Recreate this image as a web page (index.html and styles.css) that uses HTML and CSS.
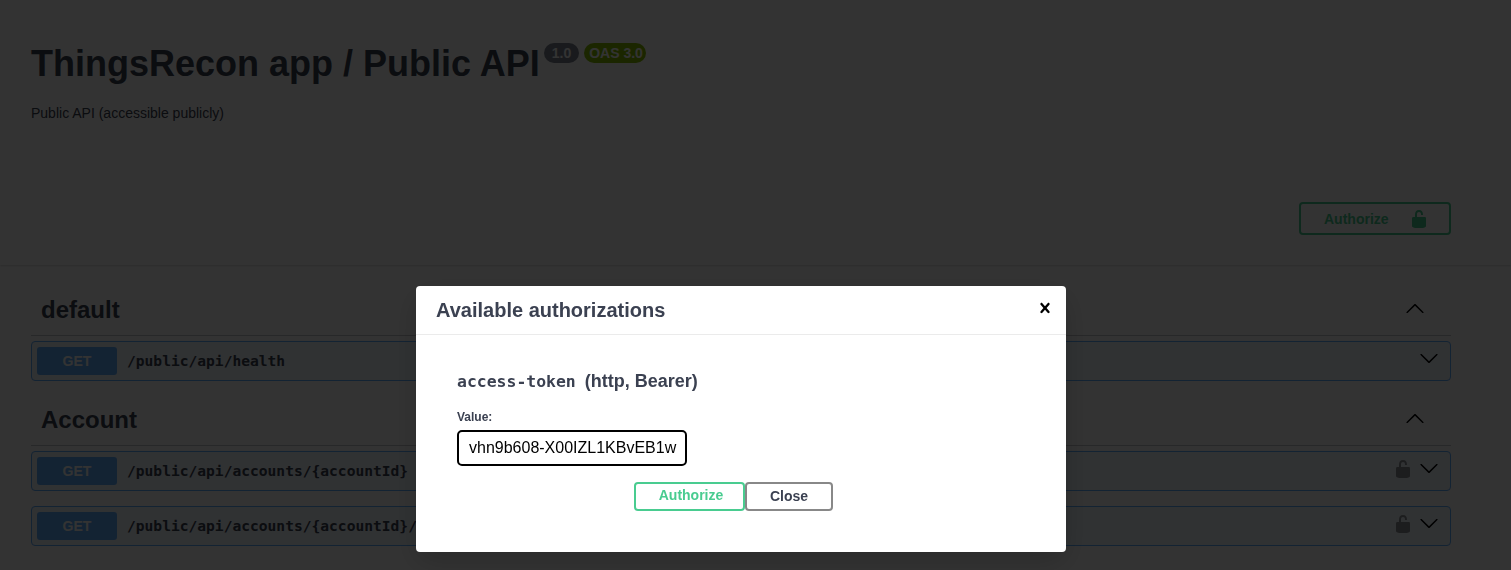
FILE: index.html
```html
<!DOCTYPE html>
<html lang="en">
<head>
<meta charset="utf-8">
<title>ThingsRecon app / Public API</title>
<link rel="stylesheet" href="styles.css">
</head>
<body>
<svg class="defs" width="0" height="0" aria-hidden="true">
  <symbol id="arrow" viewBox="0 0 20 20"><path d="M17.418 6.109c.272-.268.709-.268.979 0s.271.701 0 .969l-7.908 7.83c-.27.268-.707.268-.979 0l-7.908-7.83c-.27-.268-.27-.701 0-.969.271-.268.709-.268.979 0L10 13.25l7.418-7.141z"/></symbol>
  <symbol id="arrow-up" viewBox="0 0 20 20"><path d="M17.418 14.908c.272.268.709.268.979 0s.271-.701 0-.969l-7.908-7.83c-.27-.268-.707-.268-.979 0l-7.908 7.83c-.27.268-.27.701 0 .969.271.268.709.268.979 0L10 7.767l7.418 7.141z"/></symbol>
  <symbol id="lock" viewBox="0 0 20 20"><path transform="matrix(-1 0 0 1 20 0)" d="M15.8 8H14V5.6C14 2.703 12.665 1 10 1 7.334 1 6 2.703 6 5.6V6h2v-.801C8 3.754 8.797 3 10 3c1.203 0 2 .754 2 2.199V8H4c-.553 0-1 .646-1 1.199V17c0 .549.428 1.139.951 1.307l1.197.387C5.672 18.861 6.55 19 7.1 19h5.8c.549 0 1.428-.139 1.951-.307l1.196-.387c.524-.167.953-.757.953-1.306V9.199C17 8.646 16.352 8 15.8 8z"/></symbol>
</svg>

<header class="info">
  <div class="title-row">
    <h2 class="title">ThingsRecon app / Public API</h2>
    <span class="badge badge-version">1.0</span>
    <span class="badge badge-oas">OAS 3.0</span>
  </div>
  <p class="description">Public API (accessible publicly)</p>
</header>

<section class="scheme-bar">
  <button class="btn-authorize" type="button">
    <span>Authorize</span>
    <svg class="lock-green"><use href="#lock"/></svg>
  </button>
</section>

<main class="tags">
  <section class="tag">
    <div class="tag-head">
      <h3 class="tag-name">default</h3>
      <svg class="arrow"><use href="#arrow-up"/></svg>
    </div>
    <div class="op">
      <span class="method">GET</span>
      <code class="path">/public/api/health</code>
      <svg class="arrow"><use href="#arrow"/></svg>
    </div>
  </section>
  <section class="tag">
    <div class="tag-head">
      <h3 class="tag-name">Account</h3>
      <svg class="arrow"><use href="#arrow-up"/></svg>
    </div>
    <div class="op">
      <span class="method">GET</span>
      <code class="path">/public/api/accounts/{accountId}</code>
      <svg class="lock-dim"><use href="#lock"/></svg>
      <svg class="arrow"><use href="#arrow"/></svg>
    </div>
    <div class="op">
      <span class="method">GET</span>
      <code class="path">/public/api/accounts/{accountId}/domains</code>
      <svg class="lock-dim"><use href="#lock"/></svg>
      <svg class="arrow"><use href="#arrow"/></svg>
    </div>
  </section>
</main>

<div class="backdrop">
  <div class="modal">
    <div class="modal-head">
      <h3 class="modal-title">Available authorizations</h3>
      <button class="modal-close" type="button" aria-label="Close">
        <svg viewBox="0 0 20 20"><path d="M14.348 14.849c-.469.469-1.229.469-1.697 0L10 11.819l-2.651 3.029c-.469.469-1.229.469-1.697 0-.469-.469-.469-1.229 0-1.697l2.758-3.15-2.759-3.152c-.469-.469-.469-1.228 0-1.697.469-.469 1.228-.469 1.697 0L10 8.183l2.651-3.031c.469-.469 1.228-.469 1.697 0 .469.469.469 1.229 0 1.697l-2.758 3.152 2.758 3.15c.469.469.469 1.229 0 1.698z"/></svg>
      </button>
    </div>
    <div class="modal-body">
      <h4 class="scheme-title"><code class="scheme-name">access-token</code> (http, Bearer)</h4>
      <label class="value-label" for="token">Value:</label>
      <input class="token" id="token" type="text" value="vhn9b608-X00IZL1KBvEB1w">
      <div class="modal-actions">
        <button class="btn btn-green" type="button">Authorize</button>
        <button class="btn btn-grey" type="button">Close</button>
      </div>
    </div>
  </div>
</div>
</body>
</html>
```

FILE: styles.css
```css
* { box-sizing: border-box; }
html, body { margin: 0; height: 570px; overflow: hidden; }
body {
  background: #fff;
  color: #3b4151;
  font-family: "Liberation Sans", Arial, sans-serif;
}
.defs { position: absolute; }

.info { height: 170px; padding: 43px 31px 0; }
.title-row { display: flex; align-items: flex-start; }
.title {
  margin: 0;
  font-size: 36px;
  line-height: 41px;
  font-weight: 700;
}
.badge {
  height: 20px;
  border-radius: 10px;
  color: #fff;
  font-size: 14px;
  line-height: 20px;
  font-weight: 700;
}
.badge-version { margin-left: 4px; padding: 0 8px; background: #7d8492; }
.badge-oas { margin-left: 5px; padding: 0 3px 0 5px; background: #89bf04; }
.description { margin: 21px 0 0; font-size: 14px; line-height: 16px; }

.scheme-bar {
  height: 95px;
  padding: 32px 60px 30px 31px;
  display: flex;
  justify-content: flex-end;
  background: #fff;
  box-shadow: 0 1px 2px rgba(0, 0, 0, .15);
}
.btn-authorize {
  width: 152px;
  height: 33px;
  padding: 0 20px 0 23px;
  display: flex;
  align-items: center;
  justify-content: space-between;
  background: transparent;
  border: 2px solid #49cc90;
  border-radius: 4px;
  color: #49cc90;
  font: 700 14px "Liberation Sans", Arial, sans-serif;
}
.lock-green { width: 20px; height: 20px; fill: #49cc90; }

.tags { padding: 21px 60px 0 31px; }
.tag-head {
  height: 50px;
  padding: 0 26px 2px 10px;
  display: flex;
  align-items: center;
  justify-content: space-between;
  border-bottom: 1px solid rgba(59, 65, 81, .3);
  margin-bottom: 5px;
}
.tag-name { margin: 0; font-size: 24px; font-weight: 700; }
.arrow { width: 20px; height: 20px; flex: none; fill: #000; }
.tag-head .arrow { margin-bottom: 3px; }
.op .arrow { margin-bottom: 6px; }
.op {
  height: 40px;
  padding: 5px 11px 5px 5px;
  margin-bottom: 15px;
  display: flex;
  align-items: center;
  background: rgba(97, 175, 254, .1);
  border: 1px solid #61affe;
  border-radius: 4px;
}
.method {
  width: 80px;
  height: 28px;
  flex: none;
  background: #61affe;
  border-radius: 3px;
  color: #fff;
  font-size: 14px;
  line-height: 28px;
  font-weight: 700;
  text-align: center;
}
.path {
  flex: 1;
  margin: 0 0 2px 10px;
  font: 700 14.6px "DejaVu Sans Mono", monospace;
}
.lock-dim { width: 20px; height: 20px; margin: 0 6px 4px 0; opacity: .4; fill: #000; }

.backdrop {
  position: fixed;
  inset: 0;
  padding: 286px 0 0 416px;
  background: rgba(0, 0, 0, .8);
}
.modal {
  width: 650px;
  height: 266px;
  background: #fff;
  border-radius: 4px;
  box-shadow: 0 10px 30px -2px rgba(0, 0, 0, .2);
}
.modal-head {
  height: 49px;
  padding: 0 11px 0 20px;
  display: flex;
  align-items: center;
  justify-content: space-between;
  border-bottom: 1px solid #ebebeb;
}
.modal-title { margin: 0; font-size: 20px; font-weight: 700; }
.modal-close {
  width: 20px;
  height: 20px;
  padding: 0;
  margin-top: -5px;
  border: 0;
  background: none;
}
.modal-close svg { display: block; width: 20px; height: 20px; fill: #000; }
.modal-body { padding: 36px 0 0 41px; }
.scheme-title { margin: 0; font-size: 18px; line-height: 21px; font-weight: 700; }
.scheme-name { font: 700 16.45px "DejaVu Sans Mono", monospace; margin-right: 4px; }
.value-label {
  display: block;
  margin-top: 18px;
  font-size: 12px;
  line-height: 14px;
  font-weight: 700;
}
.token {
  display: block;
  width: 230px;
  height: 36px;
  margin-top: 6px;
  padding: 0 8px 0 10px;
  background: #fff;
  border: 2px solid #000;
  border-radius: 5px;
  color: #000;
  font: 16px "Liberation Sans", Arial, sans-serif;
  outline: none;
}
.modal-actions { display: flex; margin: 16px 0 0 177px; }
.btn {
  height: 29px;
  padding: 0;
  background: transparent;
  border-radius: 4px;
  font: 700 14px "Liberation Sans", Arial, sans-serif;
}
.btn-green { width: 111px; border: 2px solid #49cc90; color: #49cc90; padding: 0 0 3px 3px; }
.btn-grey { width: 88px; border: 2px solid #888; color: #3b4151; padding: 0 0 1px; }
```
